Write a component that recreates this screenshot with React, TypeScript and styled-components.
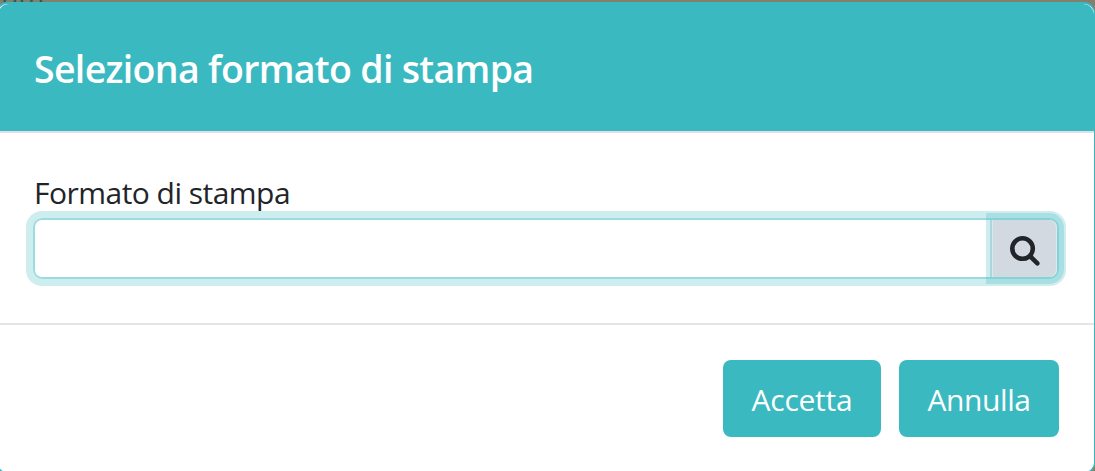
import React from "react";
import styled, { createGlobalStyle } from "styled-components";

interface ButtonProps {
  $width: number;
  $spacing: number;
}

function SearchIcon(): React.ReactElement {
  return (
    <Icon viewBox="0 128 1664 1664">
      <path d="M1152 832q0-185-131.5-316.5T704 384 387.5 515.5 256 832t131.5 316.5T704 1280t316.5-131.5T1152 832zm512 832q0 52-38 90t-90 38q-54 0-90-38l-343-342q-179 124-399 124-143 0-273.5-55.5t-225-150-150-225T0 832t55.5-273.5 150-225 225-150T704 128t273.5 55.5 225 150 150 225T1408 832q0 220-124 399l343 343q37 37 37 90z" />
    </Icon>
  );
}

function App(): React.ReactElement {
  return (
    <Backdrop>
      <GlobalStyle />
      <PageText>nm</PageText>
      <Modal>
        <Header>
          <Title>Seleziona formato di stampa</Title>
        </Header>
        <Body>
          <Label htmlFor="formato">Formato di stampa</Label>
          <InputGroup>
            <Input id="formato" type="text" />
            <Addon>
              <SearchButton aria-label="Cerca">
                <SearchIcon />
              </SearchButton>
            </Addon>
          </InputGroup>
        </Body>
        <Footer>
          <Button $width={158} $spacing={-0.25}>
            Accetta
          </Button>
          <Button $width={160} $spacing={-0.4}>
            Annulla
          </Button>
        </Footer>
      </Modal>
    </Backdrop>
  );
}

export default App;

const GlobalStyle = createGlobalStyle`
  * {
    box-sizing: border-box;
  }

  body {
    margin: 0;
    font-family: "Segoe UI", "Open Sans", "Noto Sans", sans-serif;
    color: #212529;
  }
`;

const Backdrop = styled.div`
  position: relative;
  height: 471px;
  padding-top: 2px;
  overflow: hidden;
  background: #827f6f;
`;

const PageText = styled.span`
  position: absolute;
  left: 1px;
  top: -24px;
  font-size: 28px;
  line-height: 30px;
  color: #1d5f62;
`;

const Modal = styled.div`
  position: relative;
  height: 472px;
  margin-left: -4px;
  overflow: hidden;
  background: #fff;
  border: solid #3ab9c1;
  border-width: 2px 1px 2px 2px;
  border-radius: 11px;
`;

const Header = styled.div`
  height: 129px;
  padding: 38px 36px 0;
  background: #3ab9c1;
  border-bottom: 2px solid #dee2e6;
  border-radius: 11px 11px 0 0;
`;

const Title = styled.h5`
  margin: 0;
  font-size: 37.5px;
  font-weight: 600;
  line-height: 54px;
  letter-spacing: -0.68px;
  color: #fff;
  white-space: nowrap;
`;

const Body = styled.div`
  height: 192px;
  padding: 37px 35px 0;
  border-bottom: 2px solid #e3e6e9;
`;

const Label = styled.label`
  display: block;
  height: 48px;
  padding-left: 1px;
  font-size: 30px;
  line-height: 46px;
  letter-spacing: -0.52px;
`;

const InputGroup = styled.div`
  display: flex;
  height: 61px;
  border: 2px solid #9cdce0;
  border-radius: 9px;
  box-shadow: 0 0 0 7px rgba(58, 185, 193, 0.25);
`;

const Input = styled.input`
  flex: 1;
  min-width: 0;
  padding: 0 24px;
  font: inherit;
  font-size: 30px;
  background: transparent;
  border: 0;
  outline: 0;
`;

const Addon = styled.div`
  display: flex;
  width: 67px;
  padding-left: 1px;
  border-left: 2px solid #d3dfe5;
`;

const SearchButton = styled.button`
  display: flex;
  flex: 1;
  align-items: center;
  justify-content: center;
  padding: 4px 0 0;
  background: #d3d9e0;
  border: 0;
  border-right: 1px solid #dfe7eb;
  border-radius: 0 8px 8px 0;
  box-shadow: 0 0 0 7px rgba(58, 185, 193, 0.25);
`;

const Icon = styled.svg`
  width: 29.7px;
  height: 29.7px;
  fill: #212529;
  overflow: visible;
`;

const Footer = styled.div`
  display: flex;
  justify-content: flex-end;
  gap: 18px;
  padding: 35px 35px 0;
`;

const Button = styled.button<ButtonProps>`
  width: ${(props) => props.$width}px;
  height: 77px;
  padding: 2px 0 0;
  font: inherit;
  font-size: 30px;
  letter-spacing: ${(props) => props.$spacing}px;
  color: #fff;
  background: #3ab9c1;
  border: 0;
  border-radius: 8px;
`;
